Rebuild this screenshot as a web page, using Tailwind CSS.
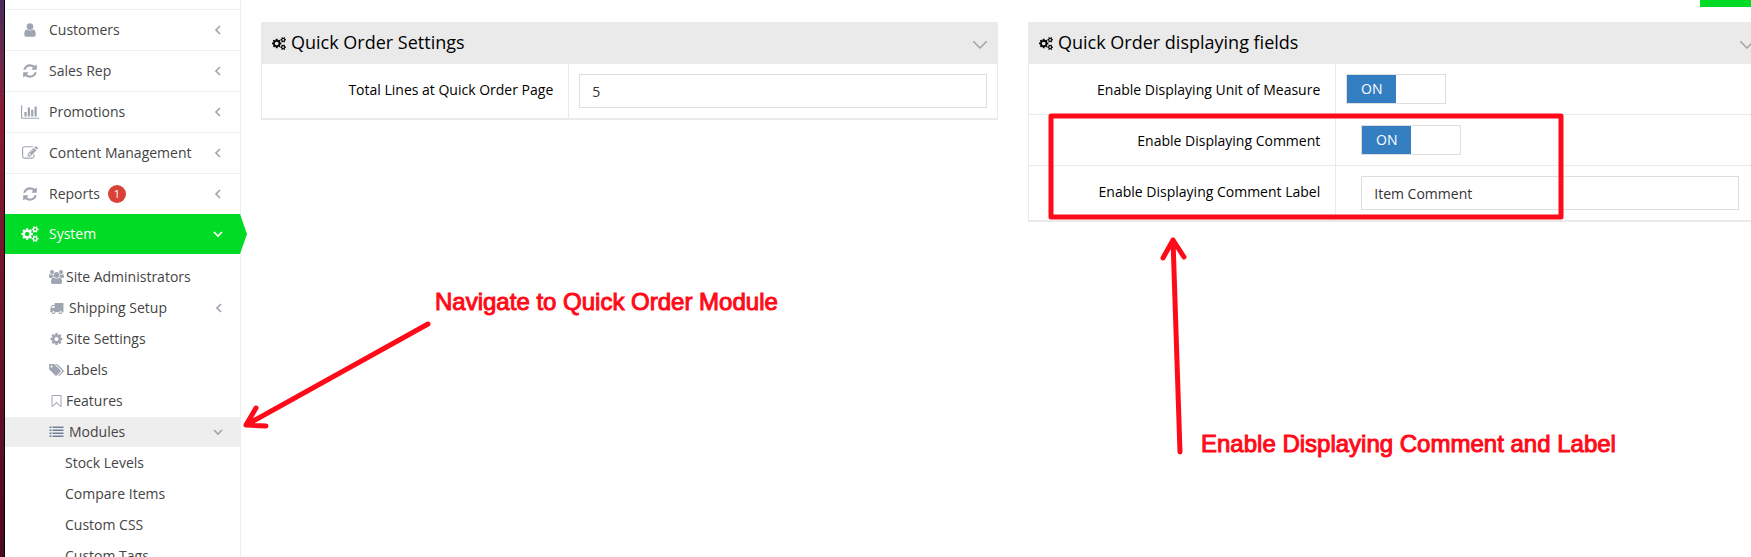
<!DOCTYPE html>
<html lang="en">
<head>
    <meta charset="UTF-8">
    <meta name="viewport" content="width=device-width, initial-scale=1.0">
    <title>Quick Order Settings</title>
    <script src="https://cdn.jsdelivr.net/npm/@tailwindcss/browser@4"></script>
</head>
<body class="relative flex h-screen overflow-hidden bg-white font-['Open_Sans',sans-serif] text-sm text-black">
    <!-- Icon sprite -->
    <svg class="hidden">
        <symbol id="user" viewBox="0 0 1792 1792"><path d="M1536 1399q0 109-62.5 187t-150.5 78h-854q-88 0-150.5-78t-62.5-187q0-85 8.5-160.5t31.5-152 58.5-131 94-89 134.5-34.5q131 128 313 128t313-128q76 0 134.5 34.5t94 89 58.5 131 31.5 152 8.5 160.5zm-256-887q0 159-112.5 271.5t-271.5 112.5-271.5-112.5-112.5-271.5 112.5-271.5 271.5-112.5 271.5 112.5 112.5 271.5z"/></symbol>
        <symbol id="refresh" viewBox="0 0 1792 1792"><path d="M1639 1056q0 5-1 7-64 268-268 434.5t-478 166.5q-146 0-282.5-55t-243.5-157l-129 129q-19 19-45 19t-45-19-19-45v-448q0-26 19-45t45-19h448q26 0 45 19t19 45-19 45l-137 137q71 66 161 102t187 36q134 0 250-65t186-179q11-17 53-117 8-23 30-23h192q13 0 22.5 9.5t9.5 22.5zm25-800v448q0 26-19 45t-45 19h-448q-26 0-45-19t-19-45 19-45l138-138q-148-137-349-137-134 0-250 65t-186 179q-11 17-53 117-8 23-30 23h-199q-13 0-22.5-9.5t-9.5-22.5v-7q65-268 270-434.5t480-166.5q146 0 284 55.5t245 156.5l130-129q19-19 45-19t45 19 19 45z"/></symbol>
        <symbol id="chart" viewBox="0 0 2048 1792"><path d="M640 896v512h-256v-512h256zm384-512v1024h-256v-1024h256zm1024 1152v128h-2048v-1536h128v1408h1920zm-640-896v768h-256v-768h256zm384-384v1152h-256v-1152h256z"/></symbol>
        <symbol id="edit" viewBox="0 0 1792 1792"><path d="M888 1184l116-116-152-152-116 116v56h96v96h56zm440-720q-16-16-33 1l-350 350q-17 17-1 33t33-1l350-350q17-17 1-33zm80 594v190q0 119-84.5 203.5t-203.5 84.5h-832q-119 0-203.5-84.5t-84.5-203.5v-832q0-119 84.5-203.5t203.5-84.5h832q63 0 117 25 15 7 18 23 3 17-9 29l-49 49q-14 14-32 8-23-6-45-6h-832q-66 0-113 47t-47 113v832q0 66 47 113t113 47h832q66 0 113-47t47-113v-126q0-13 9-22l64-64q15-15 35-7t20 29zm-96-738l288 288-672 672h-288v-288zm444 132l-92 92-288-288 92-92q28-28 68-28t68 28l152 152q28 28 28 68t-28 68z"/></symbol>
        <symbol id="cogs" viewBox="0 0 1920 1792"><path d="M896 896q0-106-75-181t-181-75-181 75-75 181 75 181 181 75 181-75 75-181zm768 512q0-52-38-90t-90-38-90 38-38 90q0 53 37.5 90.5t90.5 37.5 90.5-37.5 37.5-90.5zm0-1024q0-52-38-90t-90-38-90 38-38 90q0 53 37.5 90.5t90.5 37.5 90.5-37.5 37.5-90.5zm-384 421v185q0 10-7 19.5t-16 10.5l-155 24q-11 35-32 76 34 48 90 115 7 11 7 20 0 12-7 19-23 30-82.5 89.5t-78.5 59.5q-11 0-21-7l-115-90q-37 19-77 31-11 108-23 155-7 24-30 24h-186q-11 0-20-7.5t-10-17.5l-23-153q-34-10-75-31l-118 89q-7 7-20 7-11 0-21-8-144-133-144-160 0-9 7-19 10-14 41-53t47-61q-23-44-35-82l-152-24q-10-1-17-9.5t-7-19.5v-185q0-10 7-19.5t16-10.5l155-24q11-35 32-76-34-48-90-115-7-11-7-20 0-12 7-20 22-30 82-89t79-59q11 0 21 7l115 90q34-18 77-32 11-108 23-154 7-24 30-24h186q11 0 20 7.5t10 17.5l23 153q34 10 75 31l118-89q8-7 20-7 11 0 21 8 144 133 144 160 0 8-7 19-12 16-42 54t-45 60q23 48 34 82l152 23q10 2 17 10.5t7 19.5zm640 533v140q0 16-149 31-12 27-30 52 51 113 51 138 0 4-4 7-122 71-124 71-8 0-46-47t-52-68q-20 2-30 2t-30-2q-14 21-52 68t-46 47q-2 0-124-71-4-3-4-7 0-25 51-138-18-25-30-52-149-15-149-31v-140q0-16 149-31 13-29 30-52-51-113-51-138 0-4 4-7 4-2 35-20t59-34 30-16q8 0 46 46.5t52 67.5q20-2 30-2t30 2q51-71 92-112l6-2q4 0 124 70 4 3 4 7 0 25-51 138 17 23 30 52 149 15 149 31zm0-1024v140q0 16-149 31-12 27-30 52 51 113 51 138 0 4-4 7-122 71-124 71-8 0-46-47t-52-68q-20 2-30 2t-30-2q-14 21-52 68t-46 47q-2 0-124-71-4-3-4-7 0-25 51-138-18-25-30-52-149-15-149-31v-140q0-16 149-31 13-29 30-52-51-113-51-138 0-4 4-7 4-2 35-20t59-34 30-16q8 0 46 46.5t52 67.5q20-2 30-2t30 2q51-71 92-112l6-2q4 0 124 70 4 3 4 7 0 25-51 138 17 23 30 52 149 15 149 31z"/></symbol>
        <symbol id="cog" viewBox="0 0 1792 1792"><path d="M1152 896q0-106-75-181t-181-75-181 75-75 181 75 181 181 75 181-75 75-181zm512-109v222q0 12-8 23t-20 13l-185 28q-19 54-39 91 35 50 107 138 10 12 10 25t-9 23q-27 37-99 108t-94 71q-12 0-26-9l-138-108q-44 23-91 38-16 136-29 186-7 28-36 28h-222q-14 0-24.5-8.5t-11.5-21.5l-28-184q-49-16-90-37l-141 107q-10 9-25 9-14 0-25-11-126-114-165-168-7-10-7-23 0-12 8-23 15-21 51-66.5t54-70.5q-27-50-41-99l-183-27q-13-2-21-12.5t-8-23.5v-222q0-12 8-23t19-13l186-28q14-46 39-92-40-57-107-138-10-12-10-24 0-10 9-23 26-36 98.5-107.5t94.5-71.5q13 0 26 10l138 107q44-23 91-38 16-136 29-186 7-28 36-28h222q14 0 24.5 8.5t11.5 21.5l28 184q49 16 90 37l142-107q9-9 24-9 13 0 25 10 129 119 165 170 7 8 7 22 0 12-8 23-15 21-51 66.5t-54 70.5q26 50 41 98l183 28q13 2 21 12.5t8 23.5z"/></symbol>
        <symbol id="users" viewBox="0 0 1920 1792"><path d="M593 896q-162 5-265 128h-134q-82 0-138-40.5t-56-118.5q0-353 124-353 6 0 43.5 21t97.5 42.5 119 21.5q67 0 133-23-5 37-5 66 0 159 81 256zm1071 637q0 120-73 189.5t-194 69.5h-874q-121 0-194-69.5t-73-189.5q0-53 3.5-103.5t14-109 26.5-108.5 43-97.5 62-81 85.5-53.5 111.5-20q10 0 43 21.5t73 48 107 48 135 21.5 135-21.5 107-48 73-48 43-21.5q61 0 111.5 20t85.5 53.5 62 81 43 97.5 26.5 108.5 14 109 3.5 103.5zm-1024-1277q0 106-75 181t-181 75-181-75-75-181 75-181 181-75 181 75 75 181zm704 384q0 159-112.5 271.5t-271.5 112.5-271.5-112.5-112.5-271.5 112.5-271.5 271.5-112.5 271.5 112.5 112.5 271.5zm576 225q0 78-56 118.5t-138 40.5h-134q-103-123-265-128 81-97 81-256 0-29-5-66 66 23 133 23 59 0 119-21.5t97.5-42.5 43.5-21q124 0 124 353zm-128-609q0 106-75 181t-181 75-181-75-75-181 75-181 181-75 181 75 75 181z"/></symbol>
        <symbol id="truck" viewBox="0 0 1792 1792"><path d="M640 1408q0-52-38-90t-90-38-90 38-38 90 38 90 90 38 90-38 38-90zm-384-512h384v-256h-158q-13 0-22 9l-195 195q-9 9-9 22v30zm1280 512q0-52-38-90t-90-38-90 38-38 90 38 90 90 38 90-38 38-90zm256-1088v1024q0 15-4 26.5t-13.5 18.5-16.5 11.5-23.5 6-22.5 2-25.5 0-22.5-.5q0 106-75 181t-181 75-181-75-75-181h-384q0 106-75 181t-181 75-181-75-75-181h-64q-3 0-22.5.5t-25.5 0-22.5-2-23.5-6-16.5-11.5-13.5-18.5-4-26.5q0-26 19-45t45-19v-320q0-8-.5-35t0-38 2.5-34.5 6.5-37 14-30.5 22.5-30l198-198q19-19 50.5-32t58.5-13h160v-192q0-26 19-45t45-19h1024q26 0 45 19t19 45z"/></symbol>
        <symbol id="tags" viewBox="0 0 1920 1792"><path d="M448 448q0-53-37.5-90.5t-90.5-37.5-90.5 37.5-37.5 90.5 37.5 90.5 90.5 37.5 90.5-37.5 37.5-90.5zm1067 576q0 53-37 90l-491 492q-39 37-91 37-53 0-90-37l-715-716q-38-37-64.5-101t-26.5-117v-416q0-52 38-90t90-38h416q53 0 117 26.5t102 64.5l715 714q37 39 37 91zm384 0q0 53-37 90l-491 492q-39 37-91 37-36 0-59-14t-53-45l470-470q37-37 37-90 0-52-37-91l-715-714q-38-38-102-64.5t-117-26.5h224q53 0 117 26.5t102 64.5l715 714q37 39 37 91z"/></symbol>
        <symbol id="bookmark" viewBox="0 0 1792 1792"><path d="M1408 256h-1024v1242l423-406 89-85 89 85 423 406v-1242zm12-128q23 0 44 9 33 13 52.5 41t19.5 62v1289q0 34-19.5 62t-52.5 41q-19 8-44 8-48 0-83-32l-441-424-441 424q-36 33-83 33-23 0-44-9-33-13-52.5-41t-19.5-62v-1289q0-34 19.5-62t52.5-41q21-9 44-9h1048z"/></symbol>
        <symbol id="list" viewBox="0 0 1792 1792"><path d="M0 192h256v192H0zM384 192h1408v192H384zM0 576h256v192H0zM384 576h1408v192H384zM0 960h256v192H0zM384 960h1408v192H384zM0 1344h256v192H0zM384 1344h1408v192H384z"/></symbol>
        <symbol id="left" viewBox="0 0 10 10"><path d="M7 1L3 5l4 4" fill="none" stroke="currentColor" stroke-width="1.7"/></symbol>
        <symbol id="down" viewBox="0 0 10 10"><path d="M1 3l4 4 4-4" fill="none" stroke="currentColor" stroke-width="1.7"/></symbol>
    </svg>

    <!-- Window edge -->
    <div class="w-[5px] shrink-0 border-r border-black bg-linear-to-b from-[#4a2a5c] via-[#8a1a35] via-20% to-[#4d0a1e]"></div>

    <!-- Sidebar -->
    <nav class="w-[236px] shrink-0 border-r border-[#e9f1f6] pt-[9px] text-[#444]">
        <ul>
            <li class="border-t border-[#e9f1f6]">
                <a href="#" class="flex h-10 items-center pr-[17px] pl-4">
                    <svg class="h-4 w-[18px] fill-[#a0a6b1]"><use href="#user"/></svg>
                    <span class="ml-[10px] flex-1">Customers</span>
                    <svg class="size-[10px] text-[#a0a6b1]"><use href="#left"/></svg>
                </a>
            </li>
            <li class="border-t border-[#e9f1f6]">
                <a href="#" class="flex h-10 items-center pr-[17px] pl-4">
                    <svg class="h-4 w-[18px] fill-[#a0a6b1]"><use href="#refresh"/></svg>
                    <span class="ml-[10px] flex-1">Sales Rep</span>
                    <svg class="size-[10px] text-[#a0a6b1]"><use href="#left"/></svg>
                </a>
            </li>
            <li class="border-t border-[#e9f1f6]">
                <a href="#" class="flex h-10 items-center pr-[17px] pl-4">
                    <svg class="h-4 w-[18px] fill-[#a0a6b1]"><use href="#chart"/></svg>
                    <span class="ml-[10px] flex-1">Promotions</span>
                    <svg class="size-[10px] text-[#a0a6b1]"><use href="#left"/></svg>
                </a>
            </li>
            <li class="border-t border-[#e9f1f6]">
                <a href="#" class="flex h-10 items-center pr-[17px] pl-4">
                    <svg class="h-4 w-[18px] fill-[#a0a6b1]"><use href="#edit"/></svg>
                    <span class="ml-[10px] flex-1">Content Management</span>
                    <svg class="size-[10px] text-[#a0a6b1]"><use href="#left"/></svg>
                </a>
            </li>
            <li class="border-t border-[#e9f1f6]">
                <a href="#" class="flex h-10 items-center pr-[17px] pl-4">
                    <svg class="h-4 w-[18px] fill-[#a0a6b1]"><use href="#refresh"/></svg>
                    <span class="ml-[10px]">Reports</span>
                    <span class="mr-auto ml-2 flex size-[18px] items-center justify-center rounded-full bg-[#d84236] text-[11px] text-white">1</span>
                    <svg class="size-[10px] text-[#a0a6b1]"><use href="#left"/></svg>
                </a>
            </li>
            <li>
                <a href="#" class="relative flex h-10 items-center bg-[#00db26] pr-[17px] pl-4 text-white">
                    <svg class="h-4 w-[18px] fill-white"><use href="#cogs"/></svg>
                    <span class="ml-[10px] flex-1">System</span>
                    <svg class="size-[10px]"><use href="#down"/></svg>
                    <svg class="absolute top-0 left-full h-10 w-[7px] fill-[#00db26]" viewBox="0 0 7 40"><path d="M0 0l7 20-7 20z"/></svg>
                </a>
                <ul class="flex flex-col gap-px pt-2">
                    <li><a href="#" class="flex h-[30px] items-center pr-4 pl-11">
                        <svg class="h-[14px] w-[15px] fill-[#a0a6b1]"><use href="#users"/></svg>
                        <span class="ml-[2px]">Site Administrators</span>
                    </a></li>
                    <li><a href="#" class="flex h-[30px] items-center pr-4 pl-11">
                        <svg class="h-[14px] w-[15px] fill-[#a0a6b1]"><use href="#truck"/></svg>
                        <span class="ml-[5px] flex-1">Shipping Setup</span>
                        <svg class="size-[10px] text-[#a0a6b1]"><use href="#left"/></svg>
                    </a></li>
                    <li><a href="#" class="flex h-[30px] items-center pr-4 pl-11">
                        <svg class="h-[14px] w-[15px] fill-[#a0a6b1]"><use href="#cog"/></svg>
                        <span class="ml-[2px]">Site Settings</span>
                    </a></li>
                    <li><a href="#" class="flex h-[30px] items-center pr-4 pl-11">
                        <svg class="h-[14px] w-[15px] fill-[#a0a6b1]"><use href="#tags"/></svg>
                        <span class="ml-[2px]">Labels</span>
                    </a></li>
                    <li><a href="#" class="flex h-[30px] items-center pr-4 pl-11">
                        <svg class="h-[14px] w-[15px] fill-[#a0a6b1]"><use href="#bookmark"/></svg>
                        <span class="ml-[2px]">Features</span>
                    </a></li>
                    <li>
                        <a href="#" class="flex h-[30px] items-center bg-[#eee] pr-[17px] pl-11">
                            <svg class="h-[14px] w-[15px] fill-[#708096]"><use href="#list"/></svg>
                            <span class="ml-[5px] flex-1">Modules</span>
                            <svg class="size-[10px] text-[#a0a6b1]"><use href="#down"/></svg>
                        </a>
                        <ul class="flex flex-col gap-px pt-px">
                            <li><a href="#" class="flex h-[30px] items-center pl-[60px]">Stock Levels</a></li>
                            <li><a href="#" class="flex h-[30px] items-center pl-[60px]">Compare Items</a></li>
                            <li><a href="#" class="flex h-[30px] items-center pl-[60px]">Custom CSS</a></li>
                            <li><a href="#" class="flex h-[30px] items-center pl-[60px]">Custom Tags</a></li>
                        </ul>
                    </li>
                </ul>
            </li>
        </ul>
    </nav>

    <!-- Content, runs a little past the right edge of the window -->
    <main class="-mr-[14px] flex-1 pl-5">
        <div class="flex h-[22px] items-start justify-end">
            <button type="button" aria-label="Save" class="h-[7px] w-[65px] bg-[#00db26]"></button>
        </div>
        <div class="grid grid-cols-2 items-start gap-[30px]">
            <section class="border border-t-0 border-b-2 border-[#eaeaea]">
                <header class="flex h-[42px] items-center bg-[#eaeaea] px-[10px]">
                    <svg class="h-[13px] w-[14px] fill-black"><use href="#cogs"/></svg>
                    <h2 class="ml-[5px] flex-1 pb-[2px] text-lg leading-6">Quick Order Settings</h2>
                    <svg class="mt-1 h-2 w-[14px]" viewBox="0 0 14 8"><path d="M0 0l7 7 7-7" fill="none" stroke="#a3a3a3" stroke-width="1.5"/></svg>
                </header>
                <div class="flex">
                    <label for="lines" class="w-5/12 pt-4 pr-[15px] text-right">Total Lines at Quick Order Page</label>
                    <div class="w-7/12 border-l border-[#eaeaea] p-[10px]">
                        <input id="lines" type="text" value="5" class="h-[34px] w-full border border-[#dedede] px-3 text-[#333]">
                    </div>
                </div>
            </section>

            <section class="border border-t-0 border-b-2 border-[#eaeaea]">
                <header class="flex h-[42px] items-center bg-[#eaeaea] px-[10px]">
                    <svg class="h-[13px] w-[14px] fill-black"><use href="#cogs"/></svg>
                    <h2 class="ml-[5px] flex-1 pb-[2px] text-lg leading-6">Quick Order displaying fields</h2>
                    <svg class="mt-1 h-2 w-[14px]" viewBox="0 0 14 8"><path d="M0 0l7 7 7-7" fill="none" stroke="#a3a3a3" stroke-width="1.5"/></svg>
                </header>
                <div class="flex border-b border-[#eaeaea]">
                    <label for="uom" class="w-5/12 pt-4 pr-[15px] text-right">Enable Displaying Unit of Measure</label>
                    <div class="w-7/12 border-l border-[#eaeaea] p-[10px]">
                        <label class="flex h-[30px] w-[100px] border border-[#dedede]">
                            <input id="uom" type="checkbox" checked class="peer sr-only">
                            <span class="flex w-1/2 items-center justify-center bg-[#337ec1] font-medium text-white peer-not-checked:invisible">ON</span>
                        </label>
                    </div>
                </div>
                <div class="flex border-b border-[#eaeaea]">
                    <label for="comment" class="w-5/12 pt-4 pr-[15px] text-right">Enable Displaying Comment</label>
                    <div class="w-7/12 border-l border-[#eaeaea] px-[25px] py-[10px]">
                        <label class="flex h-[30px] w-[100px] border border-[#dedede]">
                            <input id="comment" type="checkbox" checked class="peer sr-only">
                            <span class="flex w-1/2 items-center justify-center bg-[#337ec1] font-medium text-white peer-not-checked:invisible">ON</span>
                        </label>
                    </div>
                </div>
                <div class="flex">
                    <label for="label" class="w-5/12 pt-4 pr-[15px] text-right">Enable Displaying Comment Label</label>
                    <div class="w-7/12 border-l border-[#eaeaea] px-[25px] py-[10px]">
                        <input id="label" type="text" value="Item Comment" class="h-[34px] w-full border border-[#dedede] px-3 text-[#333]">
                    </div>
                </div>
            </section>
        </div>
    </main>

    <!-- Annotations -->
    <svg class="pointer-events-none absolute top-0 left-0 h-[557px] w-[1751px]" viewBox="0 0 1751 557" fill="none" stroke="#ff0a18" stroke-width="5" stroke-linecap="round" stroke-linejoin="round">
        <rect x="1051" y="116" width="510" height="101"/>
        <path d="M428 324L246 425M256 408l-10 17 20 1"/>
        <path d="M1180 452l-7-212M1163 258l10-18 11 17"/>
    </svg>
    <p class="absolute top-[288px] left-[435px] font-['Liberation_Sans',sans-serif] text-2xl leading-7 whitespace-nowrap text-[#ff0a18] [-webkit-text-stroke:1px_#ff0a18]">Navigate to Quick Order Module</p>
    <p class="absolute top-[430px] left-[1201px] font-['Liberation_Sans',sans-serif] text-2xl leading-7 whitespace-nowrap text-[#ff0a18] [-webkit-text-stroke:1px_#ff0a18]">Enable Displaying Comment and Label</p>
</body>
</html>
